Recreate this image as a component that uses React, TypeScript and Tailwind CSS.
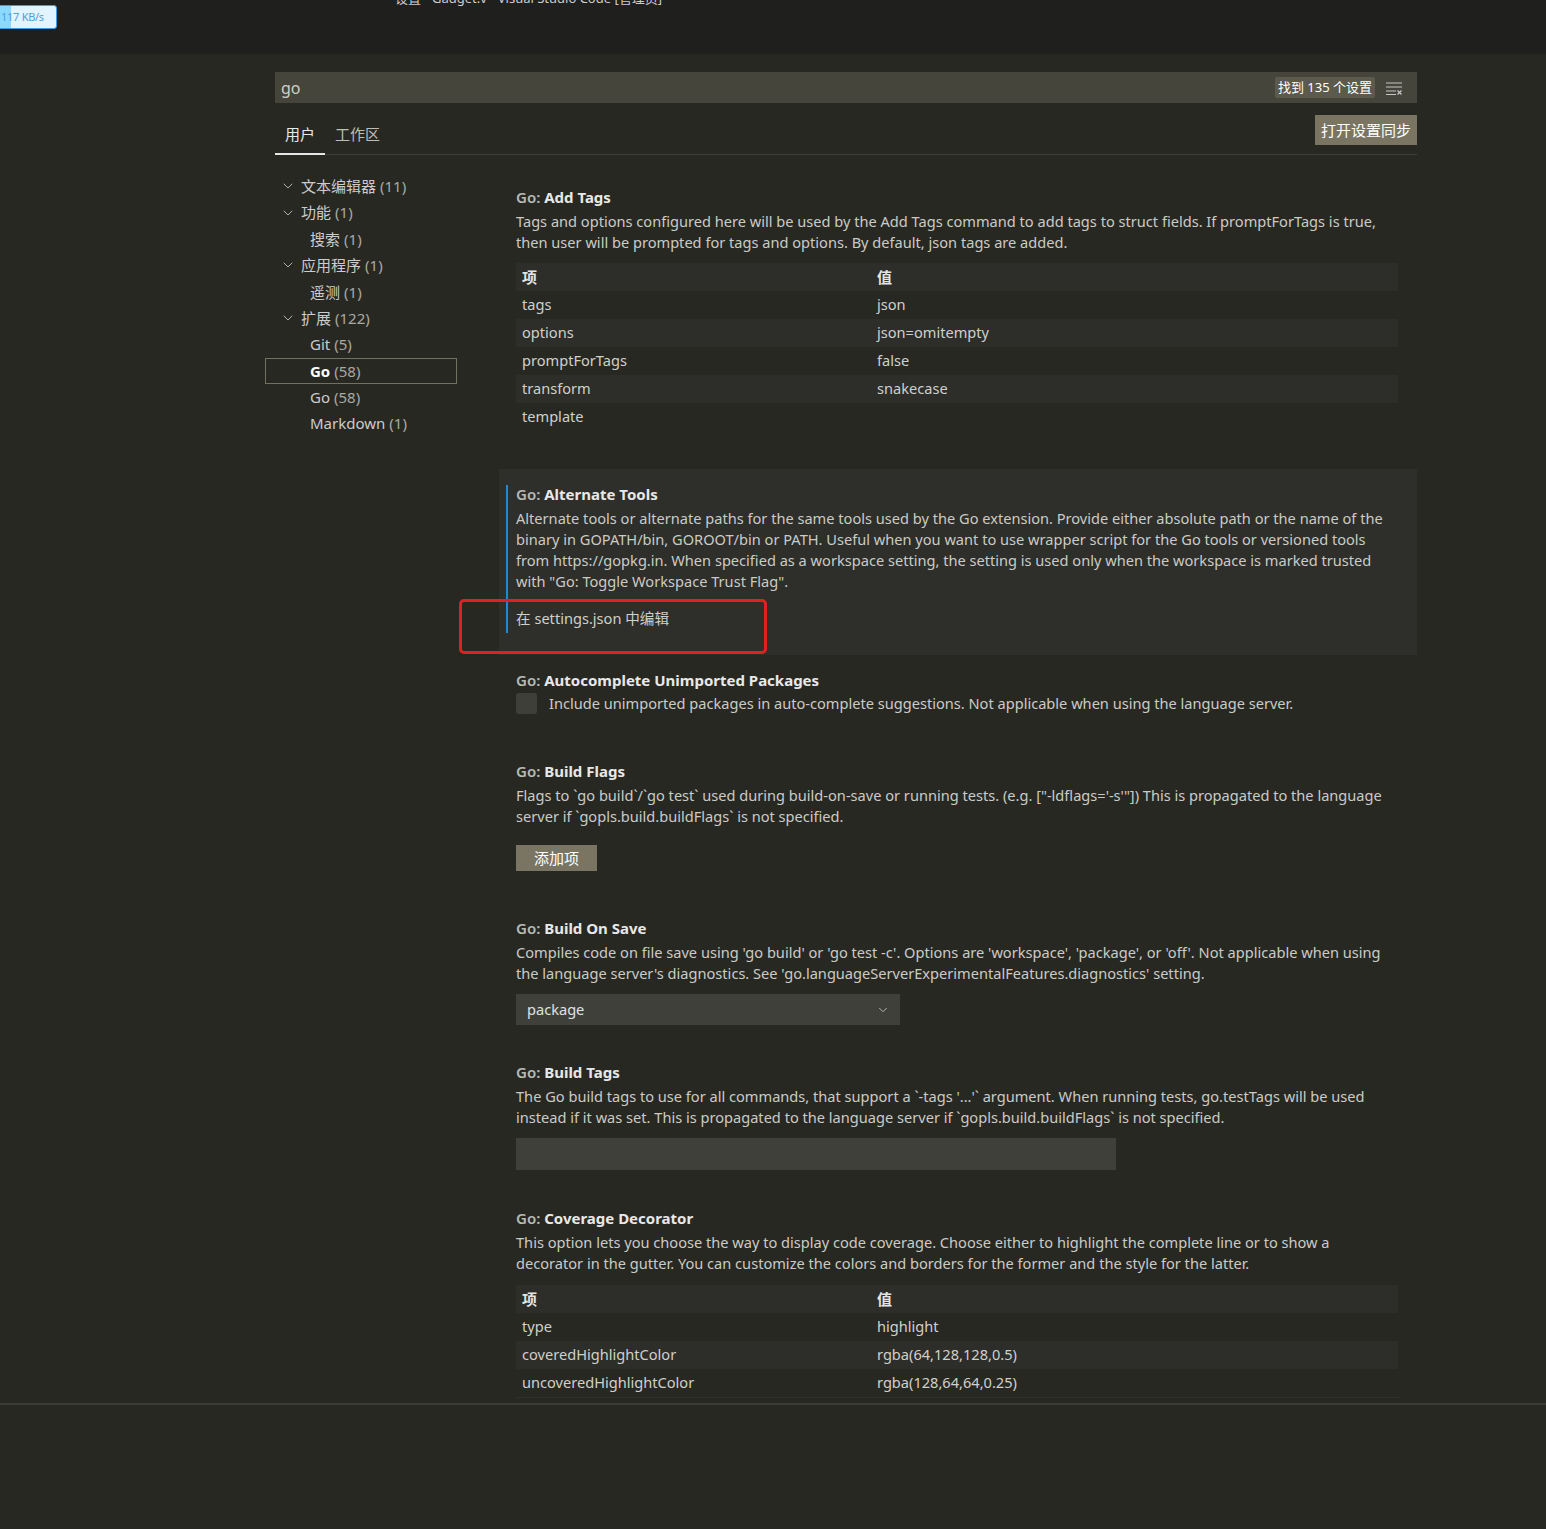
import { ChevronDown } from "lucide-react";

const font = "font-['Noto_Sans','Noto_Sans_CJK_SC',sans-serif]";

interface TocItem {
  label: string;
  count: number;
  level: 1 | 2;
  selected?: boolean;
}

const toc: TocItem[] = [
  { label: "文本编辑器", count: 11, level: 1 },
  { label: "功能", count: 1, level: 1 },
  { label: "搜索", count: 1, level: 2 },
  { label: "应用程序", count: 1, level: 1 },
  { label: "遥测", count: 1, level: 2 },
  { label: "扩展", count: 122, level: 1 },
  { label: "Git", count: 5, level: 2 },
  { label: "Go", count: 58, level: 2, selected: true },
  { label: "Go", count: 58, level: 2 },
  { label: "Markdown", count: 1, level: 2 },
];

function Title({ name }: { name: string }) {
  return (
    <div className="text-[15px] leading-[18px]">
      <span className="font-semibold text-[#b9b9b5]">Go: </span>
      <span className="font-bold text-[#e8e8e8]">{name}</span>
    </div>
  );
}

function Desc({ children }: { children: React.ReactNode }) {
  return <p className="mt-[5px] text-[14.6px] leading-[21px] text-[#cbcbc6]">{children}</p>;
}

function KvTable({ rows }: { rows: [string, string][] }) {
  return (
    <div className="mr-[2px] text-[14.6px] text-[#d0d0cb]">
      <div className="grid h-[28px] grid-cols-[355px_1fr] items-center bg-[#2d2d29] px-[6px] text-[15px] font-bold text-[#e4e4e4]">
        <span>项</span>
        <span>值</span>
      </div>
      {rows.map(([k, v], i) => (
        <div
          key={k}
          className={`grid h-[28px] grid-cols-[355px_1fr] items-center px-[6px] ${
            i % 2 === 1 ? "bg-[#2d2d29]" : ""
          }`}
        >
          <span>{k}</span>
          <span>{v}</span>
        </div>
      ))}
    </div>
  );
}

function Setting({
  children,
  focused,
  className = "",
}: {
  children: React.ReactNode;
  focused?: boolean;
  className?: string;
}) {
  return (
    <div className={`pr-[17px] pt-[16px] ${focused ? "bg-[#2e2e2a]" : ""} ${className}`}>
      <div
        className={`ml-[7px] border-l-2 pl-[8px] ${
          focused ? "border-[#1f8ad2]" : "border-transparent"
        }`}
      >
        {children}
      </div>
    </div>
  );
}

export default function App() {
  return (
    <div className={`flex h-[1529px] flex-col overflow-hidden bg-[#282823] ${font}`}>
      {/* 标题栏 */}
      <div className="relative h-[54px] shrink-0 bg-[#1f1f1e]">
        <div className="absolute left-[395px] top-[-11px] whitespace-nowrap text-[13px] text-[#cccccc]">
          设置 - Gadget.v - Visual Studio Code [管理员]
        </div>
        <div className="absolute left-[-4px] top-[5px] flex h-[24px] w-[61px] items-center overflow-hidden rounded-[3px] border border-[#3d9be0] bg-[#e1f4ff]">
          <div className="h-full w-[14px] shrink-0 bg-[#8ad9ff]" />
          <span className="absolute left-[4px] text-[11px] tracking-tight text-[#4d9fe0]">117 KB/s</span>
        </div>
      </div>

      <div className="ml-[275px] w-[1142px] shrink-0">
        {/* 搜索框 */}
        <div className="mt-[18px] flex h-[31px] items-center bg-[#45453b] pl-[6px] pr-[14px]">
          <span className="flex-1 text-[16px] text-[#cfcfcf]">go</span>
          <span className="rounded-[2px] bg-[#5b5a4d] px-[3px] text-[13px] leading-[21px] text-white">
            找到 135 个设置
          </span>
          <svg className="ml-[10px]" width="18" height="14" viewBox="0 0 18 14" fill="none">
            <path d="M1 2h16M1 6h16M1 10h10M1 13.5h10" stroke="#c8c8c8" strokeWidth="1.2" />
            <path d="M12.5 9.5l4 4M16.5 9.5l-4 4" stroke="#c8c8c8" strokeWidth="1.2" />
          </svg>
        </div>

        {/* 标签 */}
        <div className="flex h-[52px] justify-between border-b border-[#3f3f3a]">
          <div className="flex items-end text-[15px]">
            <div className="-mb-px border-b-2 border-[#e6e6e6] px-[10px] pb-[8px] leading-[22px] text-[#e8e8e8]">
              用户
            </div>
            <div className="-mb-px border-b-2 border-transparent px-[10px] pb-[8px] leading-[22px] text-[#bdbdb8]">
              工作区
            </div>
          </div>
          <button className="mt-[12px] h-[30px] bg-[#7a7563] px-[6px] text-[15px] text-white">打开设置同步</button>
        </div>

        <div className="flex">
          {/* 目录 */}
          <div className="w-[224px] shrink-0 pt-[18px]">
            <div className="-ml-[10px] w-[192px]">
              {toc.map((t, i) => (
                <div
                  key={i}
                  className={`flex h-[26.4px] items-center border text-[15px] ${
                    t.selected ? "border-[#72705f]" : "border-transparent"
                  } ${t.level === 1 ? "pl-[14px]" : "pl-[44px]"}`}
                >
                  {t.level === 1 && (
                    <ChevronDown className="mr-[5px] h-[16px] w-[16px] text-[#c5c5c0]" strokeWidth={1.3} />
                  )}
                  <span className={t.selected ? "font-bold text-white" : "text-[#cccccc]"}>{t.label}</span>
                  <span className="ml-[4px] text-[#a9a9a4]">({t.count})</span>
                </div>
              ))}
            </div>
          </div>

          {/* 设置列表 */}
          <div className="flex-1 pt-[17px]">
            <Setting className="pb-[38px]">
              <Title name="Add Tags" />
              <Desc>
                Tags and options configured here will be used by the Add Tags command to add tags to struct fields. If
                promptForTags is true, then user will be prompted for tags and options. By default, json tags are added.
              </Desc>
              <div className="mt-[10px]">
                <KvTable
                  rows={[
                    ["tags", "json"],
                    ["options", "json=omitempty"],
                    ["promptForTags", "false"],
                    ["transform", "snakecase"],
                    ["template", ""],
                  ]}
                />
              </div>
            </Setting>

            <div className="relative">
              <Setting focused className="pb-[22px]">
                <Title name="Alternate Tools" />
                <Desc>
                  Alternate tools or alternate paths for the same tools used by the Go extension. Provide either absolute
                  path or the name of the binary in GOPATH/bin, GOROOT/bin or PATH. Useful when you want to use wrapper
                  script for the Go tools or versioned tools from https://gopkg.in. When specified as a workspace setting,
                  the setting is used only when the workspace is marked trusted with "Go: Toggle Workspace Trust Flag".
                </Desc>
                <div className="mt-[16px] pb-[4px] text-[14.6px] leading-[21px] text-[#d0d0cb]">在 settings.json 中编辑</div>
              </Setting>
              <div className="absolute left-[-40px] top-[130px] h-[55px] w-[308px] rounded-[5px] border-[3px] border-[#e3201f]" />
            </div>

            <Setting className="pb-[32px]">
              <Title name="Autocomplete Unimported Packages" />
              <div className="mt-[4px] flex items-center">
                <div className="h-[21px] w-[21px] rounded-[3px] bg-[#3f3f39]" />
                <span className="ml-[12px] text-[14.6px] leading-[21px] text-[#cbcbc6]">
                  Include unimported packages in auto-complete suggestions. Not applicable when using the language
                  server.
                </span>
              </div>
            </Setting>

            <Setting className="pb-[32px]">
              <Title name="Build Flags" />
              <Desc>
                Flags to `go build`/`go test` used during build-on-save or running tests. (e.g. ["-ldflags='-s'"]) This
                is propagated to the language server if `gopls.build.buildFlags` is not specified.
              </Desc>
              <button className="mt-[18px] h-[26px] w-[81px] bg-[#7a7563] text-[15px] text-white">添加项</button>
            </Setting>

            <Setting className="pb-[22px]">
              <Title name="Build On Save" />
              <Desc>
                Compiles code on file save using 'go build' or 'go test -c'. Options are 'workspace', 'package', or
                'off'. Not applicable when using the language server's diagnostics. See
                'go.languageServerExperimentalFeatures.diagnostics' setting.
              </Desc>
              <div className="mt-[10px] flex h-[31px] w-[384px] items-center justify-between bg-[#40403a] pl-[11px] pr-[10px]">
                <span className="text-[14.6px] text-[#e0e0e0]">package</span>
                <ChevronDown className="h-[14px] w-[14px] text-[#c5c5c0]" strokeWidth={1.5} />
              </div>
            </Setting>

            <Setting className="pb-[23px]">
              <Title name="Build Tags" />
              <Desc>
                The Go build tags to use for all commands, that support a `-tags '...'` argument. When running tests,
                go.testTags will be used instead if it was set. This is propagated to the language server if
                `gopls.build.buildFlags` is not specified.
              </Desc>
              <div className="mt-[10px] h-[32px] w-[600px] bg-[#40403a]" />
            </Setting>

            <Setting className="pb-[5px]">
              <Title name="Coverage Decorator" />
              <Desc>
                This option lets you choose the way to display code coverage. Choose either to highlight the complete
                line or to show a decorator in the gutter. You can customize the colors and borders for the former and
                the style for the latter.
              </Desc>
              <div className="mt-[11px] border-b border-[#2f2f2b]">
                <KvTable
                  rows={[
                    ["type", "highlight"],
                    ["coveredHighlightColor", "rgba(64,128,128,0.5)"],
                    ["uncoveredHighlightColor", "rgba(128,64,64,0.25)"],
                  ]}
                />
              </div>
            </Setting>
          </div>
        </div>
      </div>

      <div className="flex-1 border-t-2 border-[#3d3d38]" />
    </div>
  );
}
